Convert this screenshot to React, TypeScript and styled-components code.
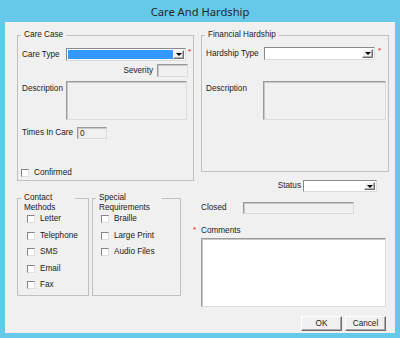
import styled, { createGlobalStyle } from 'styled-components';

const GlobalStyle = createGlobalStyle`
  html, body { margin: 0; padding: 0; }
  body {
    background: #66c9ea;
    font-family: "Liberation Sans", Arial, sans-serif;
  }
`;

const Window = styled.div`
  width: 400px;
  height: 338px;
  background: #66c9ea;
  display: flex;
  flex-direction: column;
`;

const TitleBar = styled.div`
  height: 22px;
  display: flex;
  align-items: center;
  justify-content: center;
  font-family: "Noto Sans", "Open Sans", sans-serif;
  font-size: 11.2px;
  color: #262626;
`;

const Client = styled.div`
  box-sizing: border-box;
  margin: 0 5px;
  height: 311px;
  background: #f0f0f0;
  display: flex;
  padding: 13px 0 0 12px;
  font-size: 8.2px;
  color: #1a1a1a;
`;

const Column = styled.div<{ $w: number; $ml?: number }>`
  width: ${p => p.$w}px;
  margin-left: ${p => p.$ml ?? 0}px;
  display: flex;
  flex-direction: column;
`;

const Group = styled.div<{ $w?: number; $h: number; $mt?: number }>`
  box-sizing: border-box;
  width: ${p => (p.$w ? `${p.$w}px` : '100%')};
  height: ${p => p.$h}px;
  margin-top: ${p => p.$mt ?? 0}px;
  border: 1px solid #c0c0c0;
  display: flex;
  flex-direction: column;
`;

const GroupTitle = styled.div<{ $max?: number }>`
  align-self: flex-start;
  margin: -6px 0 0 3px;
  padding: 0 3px;
  max-width: ${p => (p.$max ? `${p.$max}px` : 'none')};
  background: #f0f0f0;
  line-height: 10px;
`;

const GroupBody = styled.div<{ $pl: number; $pr?: number }>`
  display: flex;
  flex-direction: column;
  padding: 0 ${p => p.$pr ?? 0}px 0 ${p => p.$pl}px;
`;

const Row = styled.div<{ $mt?: number; $end?: boolean; $top?: boolean; $h?: number }>`
  display: flex;
  align-items: ${p => (p.$top ? 'flex-start' : 'center')};
  justify-content: ${p => (p.$end ? 'flex-end' : 'flex-start')};
  margin-top: ${p => p.$mt ?? 0}px;
  height: ${p => (p.$h ? `${p.$h}px` : 'auto')};
`;

const Label = styled.div<{ $w?: number; $right?: boolean; $pt?: number }>`
  width: ${p => (p.$w ? `${p.$w}px` : 'auto')};
  flex-shrink: 0;
  text-align: ${p => (p.$right ? 'right' : 'left')};
  padding-top: ${p => p.$pt ?? 0}px;
  line-height: 10px;
  white-space: nowrap;
`;

const Box = styled.div<{ $w: number; $h: number; $white?: boolean }>`
  box-sizing: border-box;
  width: ${p => p.$w}px;
  height: ${p => p.$h}px;
  background: ${p => (p.$white ? '#ffffff' : '#f0f0f0')};
  border: 1px solid;
  border-color: #9a9a9a #dcdcdc #dcdcdc #9a9a9a;
  box-shadow: inset 1px 1px 0 #c8c8c8;
  padding: 1px 2px;
  line-height: 9px;
  flex-shrink: 0;
`;

const Combo = styled.div<{ $w: number; $h?: number }>`
  box-sizing: border-box;
  width: ${p => p.$w}px;
  height: ${p => p.$h ?? 13}px;
  display: flex;
  padding: 1px;
  background: #ffffff;
  border: 1px solid;
  border-color: #8a8a8a #dcdcdc #dcdcdc #8a8a8a;
  flex-shrink: 0;
`;

const ComboText = styled.div<{ $selected?: boolean }>`
  flex: 1;
  background: ${p => (p.$selected ? '#3399ff' : '#ffffff')};
`;

const ComboButton = styled.div`
  box-sizing: border-box;
  width: 11px;
  background: #f0f0f0;
  border: 1px solid;
  border-color: #ffffff #6d6d6d #6d6d6d #ffffff;
  box-shadow: inset -1px -1px 0 #b0b0b0;
  display: flex;
  align-items: center;
  justify-content: center;
`;

const Arrow = styled.div`
  width: 0;
  height: 0;
  border-left: 3px solid transparent;
  border-right: 3px solid transparent;
  border-top: 3px solid #000000;
`;

const Required = styled.span<{ $ml?: number }>`
  align-self: flex-start;
  margin-left: ${p => p.$ml ?? 2}px;
  color: #ff0000;
  font-size: 8px;
  line-height: 7px;
  width: 6px;
`;

const Check = styled.div`
  box-sizing: border-box;
  width: 8px;
  height: 8px;
  background: #ffffff;
  border: 1px solid;
  border-color: #848484 #dedede #dedede #848484;
  margin-right: 5px;
  flex-shrink: 0;
`;

const CheckRow = styled.div`
  display: flex;
  align-items: center;
  height: 16.5px;
  line-height: 10px;
`;

const CheckList = styled.div`
  display: flex;
  flex-direction: column;
  margin-top: -2px;
`;

const Button = styled.button`
  box-sizing: border-box;
  width: 41px;
  height: 15px;
  padding: 0;
  font-family: inherit;
  font-size: 8.2px;
  color: #1a1a1a;
  background: #f0f0f0;
  border: 1px solid;
  border-color: #ffffff #6d6d6d #6d6d6d #ffffff;
  box-shadow: inset -1px -1px 0 #a8a8a8;
`;

const ButtonBar = styled.div`
  display: flex;
  justify-content: flex-end;
  gap: 3px;
  margin-top: 9px;
  padding-right: 3px;
`;

const DropDown = ({ w, h, selected }: { w: number; h?: number; selected?: boolean }) => (
  <Combo $w={w} $h={h}>
    <ComboText $selected={selected} />
    <ComboButton>
      <Arrow />
    </ComboButton>
  </Combo>
);

const CheckItem = ({ label }: { label: string }) => (
  <CheckRow>
    <Check />
    {label}
  </CheckRow>
);

const App = () => {
  return (
    <Window>
      <GlobalStyle />
      <TitleBar>Care And Hardship</TitleBar>
      <Client>
        <Column $w={177}>
          <Group $h={146}>
            <GroupTitle>Care Case</GroupTitle>
            <GroupBody $pl={4} $pr={5}>
              <Row $mt={8}>
                <Label $w={44}>Care Type</Label>
                <DropDown w={120} selected />
                <Required>*</Required>
              </Row>
              <Row $mt={3} $end>
                <Label>Severity</Label>
                <Box $w={31} $h={13} style={{ marginLeft: 4 }} />
              </Row>
              <Row $mt={4} $top>
                <Label $w={44} $pt={3}>Description</Label>
                <Box $w={121} $h={39} />
              </Row>
              <Row $mt={7}>
                <Label $w={55}>Times In Care</Label>
                <Box $w={30} $h={12}>0</Box>
              </Row>
              <Row $mt={29} style={{ marginLeft: -1 }}>
                <Check />
                <Label>Confirmed</Label>
              </Row>
            </GroupBody>
          </Group>
          <Row $mt={17} $top>
            <Group $w={72} $h={98}>
              <GroupTitle $max={48}>Contact Methods</GroupTitle>
              <GroupBody $pl={9}>
                <CheckList>
                  <CheckItem label="Letter" />
                  <CheckItem label="Telephone" />
                  <CheckItem label="SMS" />
                  <CheckItem label="Email" />
                  <CheckItem label="Fax" />
                </CheckList>
              </GroupBody>
            </Group>
            <Group $w={89} $h={98} style={{ marginLeft: 3 }}>
              <GroupTitle $max={60}>Special Requirements</GroupTitle>
              <GroupBody $pl={8}>
                <CheckList>
                  <CheckItem label="Braille" />
                  <CheckItem label="Large Print" />
                  <CheckItem label="Audio Files" />
                </CheckList>
              </GroupBody>
            </Group>
          </Row>
        </Column>
        <Column $w={188} $ml={7}>
          <Group $h={137}>
            <GroupTitle>Financial Hardship</GroupTitle>
            <GroupBody $pl={4}>
              <Row $mt={7}>
                <Label $w={58}>Hardship Type</Label>
                <DropDown w={111} />
                <Required $ml={3}>*</Required>
              </Row>
              <Row $mt={21} $top>
                <Label $w={57} $pt={3}>Description</Label>
                <Box $w={123} $h={39} />
              </Row>
            </GroupBody>
          </Group>
          <Row $mt={8}>
            <Label $w={100} $right>Status</Label>
            <div style={{ marginLeft: 2 }}>
              <DropDown w={74} h={12} />
            </div>
          </Row>
          <Row $mt={10}>
            <Label $w={42}>Closed</Label>
            <Box $w={111} $h={12} />
          </Row>
          <Row $mt={12} $h={10}>
            <Required $ml={-8}>*</Required>
            <Label style={{ marginLeft: 2 }}>Comments</Label>
          </Row>
          <Box $w={185} $h={69} $white style={{ marginTop: 2 }} />
          <ButtonBar>
            <Button>OK</Button>
            <Button>Cancel</Button>
          </ButtonBar>
        </Column>
      </Client>
    </Window>
  );
};

export default App;
